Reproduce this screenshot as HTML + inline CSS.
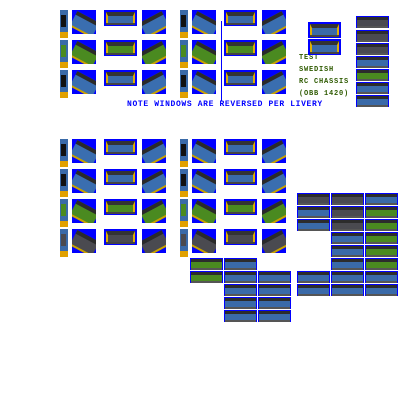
<!DOCTYPE html>
<html><head><meta charset="utf-8"><style>
html,body{margin:0;padding:0;background:#fff;width:400px;height:400px;overflow:hidden;position:relative}
.s{position:absolute;background:#0000ff;overflow:hidden}
.sq{width:24px;height:24px}
.sq i{position:absolute;left:0px;top:6px;width:25px;height:11px;background:#3a6eb0;transform:rotate(28deg);border-top:4px solid #2a2a2a;border-bottom:2px solid #c8a000}
.sq.m i{transform:rotate(-28deg)}
.wd{width:33px;height:16px}
.wd i{position:absolute;left:2px;top:2px;width:29px;height:11px;background:#3a6aa8;border-top:4px solid #333;border-left:2px solid #e0b000;border-right:2px solid #e0b000;box-sizing:border-box}
.wd b{position:absolute;left:2px;bottom:1px;width:29px;height:2px;background:#444}
.sm{width:33px;height:12px}
.sm i{position:absolute;left:1px;top:1px;width:31px;height:9px;background:#3a6aa8;border-top:3px solid #2c2c2c;box-sizing:border-box}
.sm b{position:absolute;left:1px;bottom:0;width:31px;height:2px;background:#555}
.st{width:8px;height:28px;background:#3a6aa8}
.st i{position:absolute;left:1px;top:5px;width:5px;height:12px;background:#111}
.st b{position:absolute;left:0;bottom:0;width:8px;height:6px;background:#e0a000}
.g i{background:#4a8a20}
.d i{background:#4a4a50}
.t{position:absolute;font:bold 7px "Liberation Mono",monospace;letter-spacing:0.8px;white-space:nowrap}
</style></head><body>
<div style="position:absolute;left:221px;top:21px;width:1px;height:80px;background:#0000ff"></div>
<div class="t" style="left:127px;top:100px;color:#0000ff;font-size:8px;letter-spacing:0.64px">NOTE WINDOWS ARE REVERSED PER LIVERY</div>
<div class="t" style="left:299px;top:54px;color:#2e5a00">TEST</div>
<div class="t" style="left:299px;top:66px;color:#2e5a00">SWEDISH</div>
<div class="t" style="left:299px;top:78px;color:#2e5a00">RC CHASSIS</div>
<div class="t" style="left:299px;top:90px;color:#2e5a00">(OBB 1420)</div>
<script>
function a(c,x,y,h){var d=document.createElement('div');d.className='s '+c;d.style.left=x+'px';d.style.top=y+'px';d.innerHTML='<i></i><b></b>';document.body.appendChild(d);}
var tops=[10,40,70],low=[139,169,199,229];
[0,120].forEach(function(o){
 tops.forEach(function(y,r){var g=r==1?' g':'';a('st'+g,60+o,y);a('sq'+g,72+o,y);a('wd'+g,104+o,y);a('sq m'+g,142+o,y);});
 low.forEach(function(y,r){var g=r==2?' g':(r==3?' d':'');a('st'+g,60+o,y);a('sq'+g,72+o,y);a('wd'+g,104+o,y);a('sq m'+g,142+o,y);});
});
a('wd',308,22);a('wd',308,39);
[16,30,43,56,69,82,95].forEach(function(y,i){a('sm'+(i<3?' d':(i==4?' g':'')),356,y);});
[193,206,219,271,284].forEach(function(y,i){a('sm'+(i<1?' d':''),297,y);});
[193,206,219,232,245,258,271,284].forEach(function(y,i){a('sm'+(i<3?' d':''),331,y);a('sm'+(i>0&&i<6?' g':''),365,y);});
[258,271].forEach(function(y){a('sm g',190,y);});
[258,271,284,297,310].forEach(function(y){a('sm',224,y);});
[271,284,297,310].forEach(function(y){a('sm',258,y);});
</script>
</body></html>
